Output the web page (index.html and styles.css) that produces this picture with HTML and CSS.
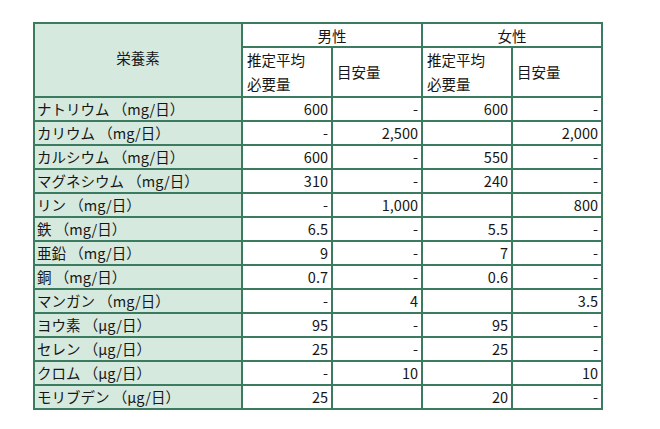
FILE: index.html
```html
<!DOCTYPE html>
<html lang="ja">
<head>
<meta charset="utf-8">
<link rel="stylesheet" href="styles.css">
</head>
<body>
<div class="wrap">
<table class="nutri">
  <thead>
    <tr>
      <th class="name-head" rowspan="2">栄養素</th>
      <th class="sex" colspan="2">男性</th>
      <th class="sex" colspan="2">女性</th>
    </tr>
    <tr>
      <th class="sub">推定平均<br>必要量</th>
      <th class="sub">目安量</th>
      <th class="sub">推定平均<br>必要量</th>
      <th class="sub">目安量</th>
    </tr>
  </thead>
  <tbody>
    <tr><td class="name">ナトリウム （mg/日）</td><td>600</td><td>-</td><td>600</td><td>-</td></tr>
    <tr><td class="name">カリウム （mg/日）</td><td>-</td><td>2,500</td><td></td><td>2,000</td></tr>
    <tr><td class="name">カルシウム （mg/日）</td><td>600</td><td>-</td><td>550</td><td>-</td></tr>
    <tr><td class="name">マグネシウム （mg/日）</td><td>310</td><td>-</td><td>240</td><td>-</td></tr>
    <tr><td class="name">リン （mg/日）</td><td>-</td><td>1,000</td><td></td><td>800</td></tr>
    <tr><td class="name">鉄 （mg/日）</td><td>6.5</td><td>-</td><td>5.5</td><td>-</td></tr>
    <tr><td class="name">亜鉛 （mg/日）</td><td>9</td><td>-</td><td>7</td><td>-</td></tr>
    <tr><td class="name">銅 （mg/日）</td><td>0.7</td><td>-</td><td>0.6</td><td>-</td></tr>
    <tr><td class="name">マンガン （mg/日）</td><td>-</td><td>4</td><td></td><td>3.5</td></tr>
    <tr><td class="name">ヨウ素 （µg/日）</td><td>95</td><td>-</td><td>95</td><td>-</td></tr>
    <tr><td class="name">セレン （µg/日）</td><td>25</td><td>-</td><td>25</td><td>-</td></tr>
    <tr><td class="name">クロム （µg/日）</td><td>-</td><td>10</td><td></td><td>10</td></tr>
    <tr><td class="name">モリブデン （µg/日）</td><td>25</td><td></td><td>20</td><td>-</td></tr>
  </tbody>
</table>
</div>
</body>
</html>
```
FILE: styles.css
```css
html, body {
  margin: 0;
  padding: 0;
  background: #ffffff;
}
.wrap {
  padding: 22px 0 0 33px;
}
.nutri {
  border-collapse: separate;
  border-spacing: 0;
  border-top: 2px solid #3b7b60;
  border-left: 2px solid #3b7b60;
  font-family: "Noto Sans CJK JP", "Noto Sans", sans-serif;
  font-size: 14.5px;
  color: #161616;
  table-layout: fixed;
}
.nutri th,
.nutri td {
  border-right: 2px solid #3b7b60;
  border-bottom: 2px solid #3b7b60;
  padding: 0 3px;
  height: 22px;
  line-height: 22px;
  font-weight: normal;
  box-sizing: content-box;
}
.nutri td {
  width: 82px;
  text-align: right;
}
.nutri .name-head {
  width: 200px;
  background: #d5e9de;
  text-align: center;
  vertical-align: middle;
  padding-bottom: 5px;
  height: auto;
}
.nutri td.name {
  width: 200px;
  background: #d5e9de;
  text-align: left;
  padding-left: 2px;
  white-space: nowrap;
}
.nutri .sex {
  text-align: center;
  line-height: 21px;
}
.nutri .sub {
  text-align: left;
  width: 82px;
  height: 47px;
  line-height: 24px;
  padding-left: 4px;
  padding-right: 2px;
}
```
